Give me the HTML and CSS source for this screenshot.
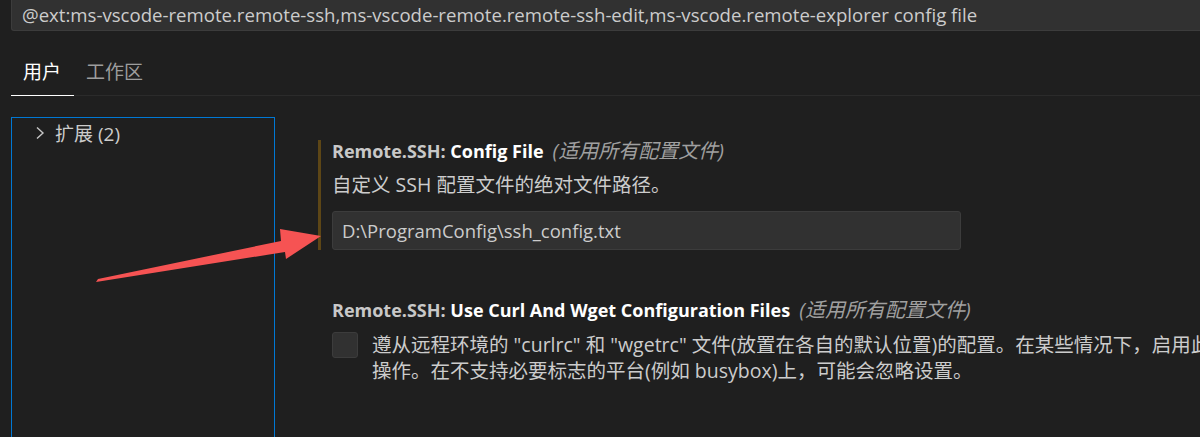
FILE: index.html
```html
<!DOCTYPE html>
<html lang="zh-CN">
<head>
<meta charset="utf-8">
<title>Settings</title>
<link rel="stylesheet" href="styles.css">
</head>
<body>
<div class="page">
  <div class="search">@ext:ms-vscode-remote.remote-ssh,ms-vscode-remote.remote-ssh-edit,ms-vscode.remote-explorer config file</div>
  <div class="tabs">
    <div class="tab active">用户</div>
    <div class="tab">工作区</div>
  </div>
  <div class="main">
    <div class="tree">
      <div class="tree-item">
        <svg class="chev" width="10" height="16" viewBox="0 0 10 16"><path d="M2 2.5 L8 8 L2 13.5" fill="none" stroke="#c5c5c5" stroke-width="1.4"/></svg>
        <span>扩展 (2)</span>
      </div>
    </div>
    <div class="settings">
      <div class="setting modified">
        <div class="title"><span class="cat">Remote.SSH: </span><span class="label">Config File</span><span class="scope">(适用所有配置文件)</span></div>
        <div class="desc">自定义 SSH 配置文件的绝对文件路径。</div>
        <div class="input">D:\ProgramConfig\ssh_config.txt</div>
      </div>
      <div class="setting second">
        <div class="title"><span class="cat">Remote.SSH: </span><span class="label">Use Curl And Wget Configuration Files</span><span class="scope">(适用所有配置文件)</span></div>
        <div class="check-row">
          <div class="checkbox"></div>
          <div class="check-text">
            <div class="line">遵从远程环境的 "curlrc" 和 "wgetrc" 文件(放置在各自的默认位置)的配置。在某些情况下，启用此设置</div>
            <div class="line">操作。在不支持必要标志的平台(例如 busybox)上，可能会忽略设置。</div>
          </div>
        </div>
      </div>
    </div>
  </div>
  <svg class="arrow" width="1200" height="437" viewBox="0 0 1200 437">
    <polygon points="96,282 98,279 281,241 280,229 321,236 286,259 285,252" fill="#f65353"/>
  </svg>
</div>
</body>
</html>
```

FILE: styles.css
```css
html, body {
  margin: 0;
  padding: 0;
  background: #1f1f1f;
  overflow: hidden;
}
body {
  width: 1200px;
  height: 437px;
  font-family: "Open Sans", "Noto Sans CJK SC", sans-serif;
  color: #cccccc;
  font-size: 18px;
}
.page {
  position: relative;
  width: 1200px;
  height: 437px;
  overflow: hidden;
}
.search {
  margin-left: 11px;
  height: 30px;
  line-height: 30px;
  background: #313131;
  border-left: 1px solid #3c3c3c;
  border-bottom: 1px solid #3c3c3c;
  border-bottom-left-radius: 3px;
  padding-left: 10px;
  white-space: nowrap;
  overflow: hidden;
  color: #cccccc;
  font-size: 18.6px;
}
.tabs {
  display: flex;
  margin-left: 11px;
  height: 64px;
  border-bottom: 1px solid #2b2b2b;
}
.tab {
  padding: 27px 13px 8px 12px;
  line-height: 28px;
  font-size: 19px;
  color: #9d9d9d;
}
.tab.active {
  color: #ffffff;
  border-bottom: 1px solid #ffffff;
  margin-bottom: -1px;
}
.main {
  display: flex;
  align-items: flex-start;
}
.tree {
  margin-left: 11px;
  margin-top: 21px;
  width: 262px;
  height: 400px;
  border: 1px solid #0078d4;
  flex: none;
}
.tree-item {
  display: flex;
  align-items: center;
  height: 28px;
  margin-top: 1px;
  padding-left: 23px;
  gap: 10px;
  color: #cccccc;
  font-size: 19px;
}
.chev {
  flex: none;
}
.settings {
  margin-left: 43px;
  margin-top: 44px;
  display: flex;
  flex-direction: column;
}
.setting {
  border-left: 3px solid transparent;
  padding-left: 11px;
}
.setting.modified {
  border-left-color: #5d4616;
}
.setting.second {
  margin-top: 49px;
}
.title {
  line-height: 22px;
  font-weight: 700;
  white-space: nowrap;
  font-size: 18px;
}
.cat {
  color: #c8c8c8;
}
.label {
  color: #ffffff;
}
.scope {
  font-weight: 400;
  font-style: italic;
  color: #a0a0a0;
  margin-left: 9px;
  font-size: 20px;
}
.desc {
  margin-top: 10px;
  line-height: 26px;
  color: #cccccc;
  font-size: 19.5px;
}
.input {
  margin-top: 13px;
  width: 618px;
  height: 37px;
  line-height: 37px;
  padding-left: 9px;
  background: #313131;
  border: 1px solid #3c3c3c;
  border-radius: 3px;
  color: #cccccc;
  font-size: 18.5px;
}
.check-row {
  display: flex;
  margin-top: 11px;
  gap: 14px;
}
.checkbox {
  flex: none;
  width: 24px;
  height: 24px;
  background: #313131;
  border: 1px solid #3c3c3c;
  border-radius: 3px;
}
.check-text {
  line-height: 26px;
  white-space: nowrap;
  font-size: 19.5px;
}
.line {
  white-space: nowrap;
}
.arrow {
  position: absolute;
  left: 0;
  top: 0;
  pointer-events: none;
}
```
